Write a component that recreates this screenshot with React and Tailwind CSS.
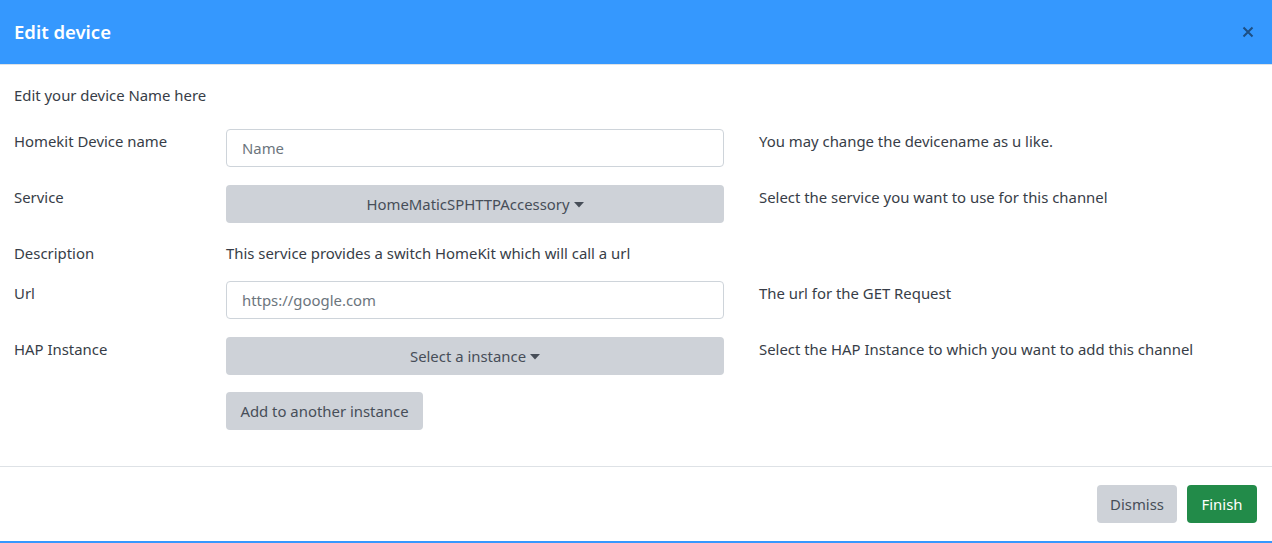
import React from "react";

function Caret() {
  return (
    <svg width="10" height="6" viewBox="0 0 10 6" className="inline-block ml-1 mb-[2px]">
      <path d="M0 0h10L5 5.5z" fill="currentColor" />
    </svg>
  );
}

function Row({ label, help, children, className = "" }) {
  return (
    <div className={`flex items-start ${className}`}>
      <div className="w-[212px] shrink-0 leading-6">{label}</div>
      <div className="w-[498px] shrink-0">{children}</div>
      <div className="pl-[35px] leading-6">{help}</div>
    </div>
  );
}

export default function App() {
  return (
    <div className="w-[1272px] h-[543px] bg-white text-[14.9px] text-[#373d47] font-['Noto_Sans',sans-serif] flex flex-col overflow-hidden">
      <div className="h-[65px] shrink-0 bg-[#3598fe] border-b border-[#dee2e6] flex items-center justify-between px-[14px]">
        <h5 className="text-[18.5px] font-semibold text-white">Edit device</h5>
        <button className="text-[#1d4f84] mr-[4px]">
          <svg width="12" height="12" viewBox="0 0 12 12">
            <path d="M1.5 1.5l9 9M10.5 1.5l-9 9" stroke="currentColor" strokeWidth="2" />
          </svg>
        </button>
      </div>

      <div className="flex-1 px-[14px] pt-[18px]">
        <p className="leading-6">Edit your device Name here</p>

        <Row className="mt-[22px]" label="Homekit Device name" help="You may change the devicename as u like.">
          <input
            placeholder="Name"
            className="w-full h-[38px] px-[15px] border border-[#ced4da] rounded text-[14.9px] placeholder:text-[#6c757d] outline-none"
          />
        </Row>

        <Row className="mt-[18px]" label="Service" help="Select the service you want to use for this channel">
          <button className="w-full h-[38px] rounded bg-[#ced2d8] text-[#474e58]">
            HomeMaticSPHTTPAccessory<Caret />
          </button>
        </Row>

        <Row className="mt-[18px]" label="Description" help="">
          <div className="leading-6">This service provides a switch HomeKit which will call a url</div>
        </Row>

        <Row className="mt-[16px]" label="Url" help="The url for the GET Request">
          <input
            placeholder="https://google.com"
            className="w-full h-[38px] px-[15px] border border-[#ced4da] rounded text-[14.9px] placeholder:text-[#6c757d] outline-none"
          />
        </Row>

        <Row className="mt-[18px]" label="HAP Instance" help="Select the HAP Instance to which you want to add this channel">
          <button className="w-full h-[38px] rounded bg-[#ced2d8] text-[#474e58]">
            Select a instance<Caret />
          </button>
        </Row>

        <div className="flex mt-[17px]">
          <div className="w-[212px] shrink-0" />
          <button className="h-[38px] w-[197px] rounded bg-[#ced2d8] text-[#474e58]">
            Add to another instance
          </button>
        </div>
      </div>

      <div className="h-[77px] shrink-0 border-t border-[#dee2e6] border-b-2 border-b-[#3598fe] flex items-center justify-end gap-[10px] pr-[15px]">
        <button className="h-[38px] w-[80px] rounded bg-[#ced2d8] text-[#474e58]">Dismiss</button>
        <button className="h-[38px] w-[70px] rounded bg-[#228b49] text-white">Finish</button>
      </div>
    </div>
  );
}
